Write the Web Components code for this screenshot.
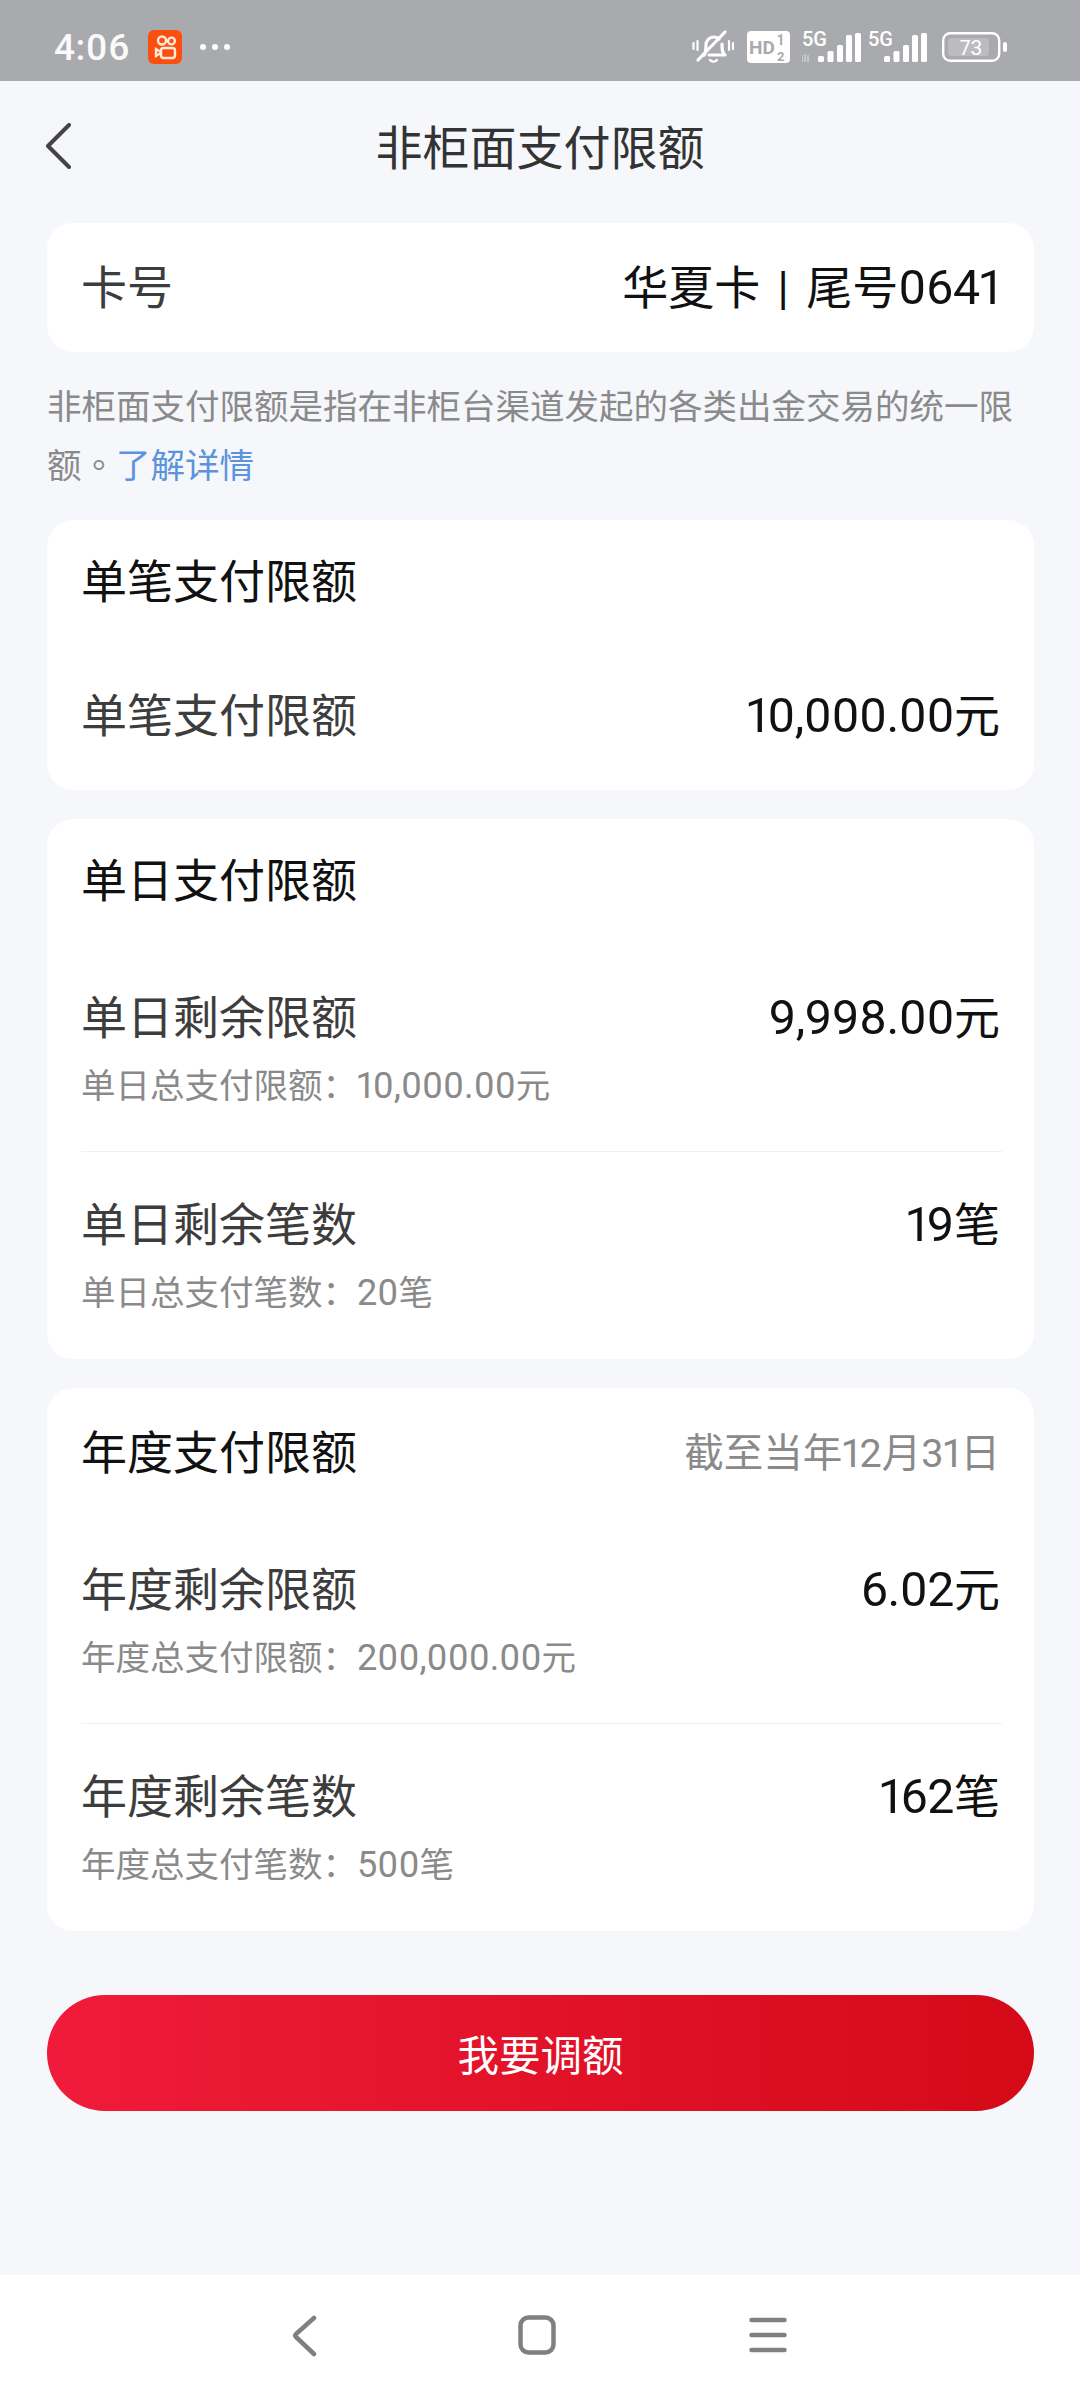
<!DOCTYPE html>
<html lang="zh-CN">
<head>
<meta charset="utf-8">
<title>非柜面支付限额</title>
<style>
    html, body { margin: 0; padding: 0; }
    body {
        width: 1080px;
        height: 2400px;
        display: flex;
        flex-direction: column;
        background: #f5f7fb;
        font-family: Roboto, "Noto Sans CJK SC", sans-serif;
        font-variant-numeric: proportional-nums;
        overflow: hidden;
    }
    limit-page { flex: 1; }
    .mark { font-family: "Noto Sans CJK TC", sans-serif; }
</style>
</head>
<body>
<status-bar></status-bar>
<top-header>非柜面支付限额</top-header>
<limit-page>
    <info-card>
        <limit-row label="卡号" value="华夏卡 | 尾号0641" plain="129"></limit-row>
    </info-card>
    <limit-note>非柜面支付限额是指在非柜台渠道发起的各类出金交易的统一限额<span class="mark" lang="zh-TW">。</span><a>了解详情</a></limit-note>
    <info-card heading="单笔支付限额">
        <limit-row label="单笔支付限额" value="10,000.00元" plain="148"></limit-row>
    </info-card>
    <info-card heading="单日支付限额">
        <limit-row label="单日剩余限额" value="9,998.00元" sub="单日总支付限额：10,000.00元"></limit-row>
        <limit-row label="单日剩余笔数" value="19笔" sub="单日总支付笔数：20笔"></limit-row>
    </info-card>
    <info-card heading="年度支付限额" aside="截至当年12月31日">
        <limit-row label="年度剩余限额" value="6.02元" sub="年度总支付限额：200,000.00元"></limit-row>
        <limit-row label="年度剩余笔数" value="162笔" sub="年度总支付笔数：500笔"></limit-row>
    </info-card>
    <red-button>我要调额</red-button>
</limit-page>
<system-nav></system-nav>

<script>
// digits in the reference are a little taller than the han text next to them
const wrapNum = (text) => text.replace(/[\d,.]+/g, (m) => `<span class="num">${m}</span>`);

const signalBars = `
    <g fill="#fff">
        <rect x="16" y="29" width="6" height="6" rx="1.5"/>
        <rect x="25.500" y="24" width="6" height="11" rx="1.5"/>
        <rect x="35" y="18" width="6" height="17" rx="1.5"/>
        <rect x="44" y="8" width="6" height="27" rx="1.5"/>
        <rect x="53" y="6" width="6" height="29" rx="1.5"/>
    </g>`;

class StatusBar extends HTMLElement {
    constructor() {
        super();
        this.attachShadow({ mode: 'open' });
        this.shadowRoot.innerHTML = `
        <style>
            :host {
                display: flex;
                align-items: center;
                height: 81px;
                box-sizing: border-box;
                padding: 13px 72px 0 54px;
                background: #a9aaae;
                color: #fff;
                font-family: Roboto, sans-serif;
            }
            .time { font-size: 37px; font-weight: 500; letter-spacing: .5px; line-height: 1; opacity: .95; }
            .app { margin-left: 18px; width: 34px; height: 34px; display: block; }
            .dots { margin-left: 18px; display: flex; gap: 6px; }
            .dots i { width: 6px; height: 6px; border-radius: 50%; background: #fff; }
            .right { margin-left: auto; display: flex; align-items: center; }
            svg { display: block; }
            svg text { font-family: Roboto, sans-serif; fill: #fff; }
        </style>
        <span class="time">4:06</span>
        <svg class="app" viewBox="0 0 34 34">
            <rect width="34" height="34" rx="6" fill="#fb4f0f"/>
            <g fill="none" stroke="#ffe9d8" stroke-width="2.4">
                <circle cx="14" cy="10.500" r="4"/>
                <circle cx="23.500" cy="11" r="3.400"/>
                <rect x="13" y="18" width="14" height="10" rx="2.500"/>
                <path d="M13 22l-5-3v7l5-3"/>
            </g>
        </svg>
        <span class="dots"><i></i><i></i><i></i></span>
        <div class="right">
            <svg width="42" height="36" viewBox="0 0 42 36" fill="none" stroke="#fff" stroke-width="3.2" stroke-linecap="round" stroke-linejoin="round">
                <path d="M12 26c2-2 2-7 2-10 0-4 3-8 8-8 2 0 4 1 5 2M30 15c0 5 0 9 3 11H17"/>
                <path d="M18 31c2 2 5 2 7 0" stroke-width="2.4"/>
                <path d="M6 31L33 3"/>
                <path d="M1.500 14v6M5.500 12v9M37 12v9M41 14v6" stroke-width="2.2"/>
            </svg>
            <svg style="margin-left:13px" width="43" height="32" viewBox="0 0 43 32">
                <rect width="43" height="32" rx="4" fill="#fff"/>
                <text x="2" y="22.500" font-size="19" font-weight="700" style="fill:#a9aaae">HD</text>
                <text x="30" y="14" font-size="14" font-weight="700" style="fill:#a9aaae">1</text>
                <text x="30" y="30" font-size="13" font-weight="700" style="fill:#a9aaae">2</text>
            </svg>
            <svg style="margin-left:12px" width="60" height="40" viewBox="0 0 60 40">
                <text x="0" y="19" font-size="20" font-weight="500">5G</text>
                <path d="M0 28v7M3 35v-8M6 28v7" stroke="#fff" stroke-opacity=".45" stroke-width="1.6" fill="none"/>
                ${signalBars}
            </svg>
            <svg style="margin-left:6px" width="60" height="40" viewBox="0 0 60 40">
                <text x="0" y="19" font-size="20" font-weight="500">5G</text>
                ${signalBars}
            </svg>
            <svg style="margin-left:14px" width="66" height="30" viewBox="0 0 66 30">
                <rect x="1.200" y="1.200" width="56" height="27.600" rx="7" fill="none" stroke="#fff" stroke-width="2.400"/>
                <rect x="6" y="6" width="41" height="18" rx="3" fill="#fff" fill-opacity=".22"/>
                <rect x="61" y="10" width="4" height="10" rx="2" fill="#fff"/>
                <text x="29" y="22.500" font-size="21" text-anchor="middle">73</text>
            </svg>
        </div>
        `;
    }
}

class TopHeader extends HTMLElement {
    constructor() {
        super();
        this.attachShadow({ mode: 'open' });
        this.shadowRoot.innerHTML = `
        <style>
            :host {
                display: flex;
                align-items: center;
                justify-content: center;
                height: 126px;
                margin-bottom: 16px;
                position: relative;
                font-size: 47px;
                color: #333;
            }
            svg { position: absolute; left: 44px; top: 42px; }
        </style>
        <svg width="28" height="46" viewBox="0 0 28 46" fill="none" stroke="#444" stroke-width="4" stroke-linecap="round" stroke-linejoin="round">
            <path d="M25 2L4 23l21 21"/>
        </svg>
        <slot></slot>
        `;
    }
}

class LimitPage extends HTMLElement {
    constructor() {
        super();
        this.attachShadow({ mode: 'open' });
        this.shadowRoot.innerHTML = `
        <style>
            :host {
                display: flex;
                flex-direction: column;
                gap: 29px;
                padding: 0 46px 0 47px;
            }
        </style>
        <slot></slot>
        `;
    }
}

class InfoCard extends HTMLElement {
    constructor() {
        super();
        this.attachShadow({ mode: 'open' });
        const heading = this.getAttribute('heading');
        const aside = this.getAttribute('aside');
        this.shadowRoot.innerHTML = `
        <style>
            :host {
                display: block;
                background: #fff;
                border-radius: 26px;
                padding: 0 32px 0 34px;
            }
            .head {
                display: flex;
                align-items: center;
                justify-content: space-between;
                height: 116px;
                padding-bottom: 6px;
                font-size: 46px;
                color: #111;
            }
            .head.has-aside { padding-top: 3px; }
            .aside { font-size: 39.5px; color: #8a8a8a; margin-right: 2px; }
            ::slotted(limit-row:not(:last-child)) { border-bottom: 1px solid #f1f1f1; }
            ::slotted(limit-row:last-child:not([plain])) { padding: 41px 0 41px; }
        </style>
        ${heading ? `<div class="head${aside ? ' has-aside' : ''}"><span>${heading}</span>${aside ? `<span class="aside">${wrapNum(aside)}</span>` : ''}</div>` : ''}
        <slot></slot>
        `;
    }
}

class LimitRow extends HTMLElement {
    constructor() {
        super();
        this.attachShadow({ mode: 'open' });
        const sub = this.getAttribute('sub');
        const plain = this.getAttribute('plain');
        this.shadowRoot.innerHTML = `
        <style>
            :host {
                display: block;
                padding: 45px 0 40px;
            }
            :host([plain]) { padding: 0; height: ${plain || 0}px; display: flex; align-items: center; }
            .main {
                display: flex;
                width: 100%;
                align-items: center;
                justify-content: space-between;
                font-size: 46px;
                line-height: 64px;
            }
            .label { color: #3d3d3d; }
            .value { color: #111; margin-right: 2px; word-spacing: 6px; }
            .value .num { letter-spacing: -.5px; }
            .num { font-size: 1.05em; }
            .sub { margin-top: 11px; font-size: 34.5px; line-height: 50px; color: #8a8a8a; }
        </style>
        <div class="main">
            <span class="label">${this.getAttribute('label')}</span>
            <span class="value">${wrapNum(this.getAttribute('value'))}</span>
        </div>
        ${sub ? `<div class="sub">${wrapNum(sub)}</div>` : ''}
        `;
    }
}

class LimitNote extends HTMLElement {
    constructor() {
        super();
        this.attachShadow({ mode: 'open' });
        this.shadowRoot.innerHTML = `
        <style>
            :host {
                display: block;
                height: 112px;
                margin-top: -2px;
                font-size: 34.5px;
                line-height: 56px;
                color: #8a8a8a;
            }
            ::slotted(a) { color: #5b93dd; }
        </style>
        <slot></slot>
        `;
    }
}

class RedButton extends HTMLElement {
    constructor() {
        super();
        this.attachShadow({ mode: 'open' });
        this.shadowRoot.innerHTML = `
        <style>
            :host {
                display: flex;
                align-items: center;
                justify-content: center;
                height: 116px;
                margin-top: 35px;
                border-radius: 58px;
                background: linear-gradient(90deg, #f01b3a, #d40a18);
                color: #fff;
                font-size: 41.5px;
            }
        </style>
        <slot></slot>
        `;
    }
}

class SystemNav extends HTMLElement {
    constructor() {
        super();
        this.attachShadow({ mode: 'open' });
        this.shadowRoot.innerHTML = `
        <style>
            :host {
                display: flex;
                padding: 40px 0 0 291px;
                height: 125px;
                box-sizing: border-box;
                background: #fff;
            }
            svg { display: block; }
        </style>
        <svg width="26" height="42" viewBox="0 0 26 42" fill="none" stroke="#808080" stroke-width="4.5" stroke-linecap="round" stroke-linejoin="round">
            <path d="M23 3L5 19q-1.500 1.500 0 3l18 17"/>
        </svg>
        <svg style="margin-left:201px" width="38" height="40" viewBox="0 0 38 40" fill="none" stroke="#808080" stroke-width="4.5">
            <rect x="2.500" y="2.500" width="33" height="35" rx="8"/>
        </svg>
        <svg style="margin-left:193px" width="38" height="40" viewBox="0 0 38 40" fill="none" stroke="#808080" stroke-width="4.5" stroke-linecap="round">
            <path d="M2.500 5h33M2.500 20h33M2.500 35h33"/>
        </svg>
        `;
    }
}

customElements.define('status-bar', StatusBar);
customElements.define('top-header', TopHeader);
customElements.define('limit-page', LimitPage);
customElements.define('info-card', InfoCard);
customElements.define('limit-row', LimitRow);
customElements.define('limit-note', LimitNote);
customElements.define('red-button', RedButton);
customElements.define('system-nav', SystemNav);
</script>
</body>
</html>
